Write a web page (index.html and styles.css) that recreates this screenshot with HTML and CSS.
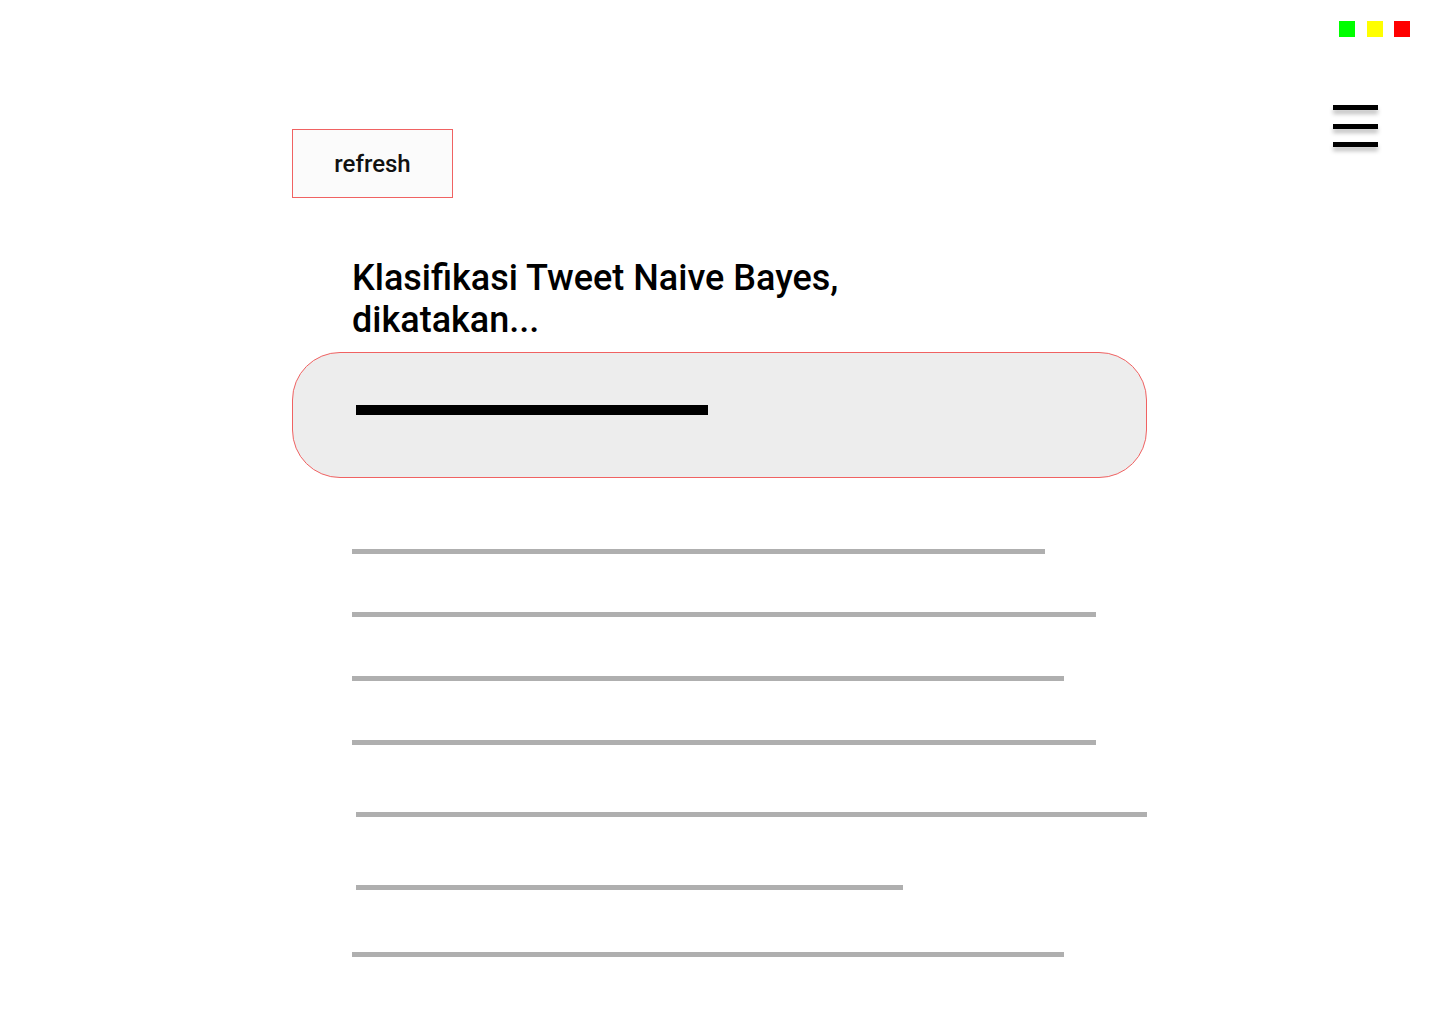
FILE: index.html
```html
<!DOCTYPE html>
<html lang="id">
<head>
<meta charset="utf-8">
<title>Klasifikasi Tweet</title>
<link rel="stylesheet" href="styles.css">
</head>
<body>
  <div class="window-bar">
    <span class="dot dot-green"></span>
    <span class="dot dot-yellow"></span>
    <span class="dot dot-red"></span>
  </div>
  <div class="top-row">
    <button class="refresh-btn" type="button">refresh</button>
    <div class="hamburger" aria-label="menu">
      <span class="bar"></span>
      <span class="bar"></span>
      <span class="bar"></span>
    </div>
  </div>
  <main class="content">
    <h1 class="title">Klasifikasi Tweet Naive Bayes, dikatakan...</h1>
    <div class="search-box">
      <span class="search-text"></span>
    </div>
    <div class="lines">
      <div class="line" style="width:693px"></div>
      <div class="line" style="width:744px"></div>
      <div class="line" style="width:712px"></div>
      <div class="line" style="width:744px"></div>
      <div class="line line-indent" style="width:791px"></div>
      <div class="line line-indent" style="width:547px"></div>
      <div class="line" style="width:712px"></div>
    </div>
  </main>
</body>
</html>
```
FILE: styles.css
```css
* { box-sizing: border-box; }

html, body {
  margin: 0;
  padding: 0;
  background: #ffffff;
  font-family: Roboto, "Liberation Sans", Arial, sans-serif;
  color: #000;
}

.window-bar {
  display: flex;
  justify-content: flex-end;
  gap: 11.5px;
  padding: 21px 30px 0 0;
}

.dot {
  display: block;
  width: 16px;
  height: 16px;
}
.dot-green { background: #00ff00; }
.dot-yellow { background: #ffff00; }
.dot-red { background: #ff0000; }

.top-row {
  display: flex;
  justify-content: space-between;
  align-items: flex-start;
  padding: 0 62px 0 292px;
}

.refresh-btn {
  margin-top: 92px;
  width: 161px;
  height: 69px;
  border: 1px solid #f06262;
  background: #fbfbfb;
  font-family: Roboto, "Liberation Sans", Arial, sans-serif;
  font-size: 24px;
  font-weight: 500;
  color: #111;
  padding: 0;
  cursor: pointer;
}

.hamburger {
  margin-top: 68px;
  display: flex;
  flex-direction: column;
  gap: 13.5px;
  width: 45px;
}

.hamburger .bar {
  display: block;
  height: 5px;
  background: #000;
  box-shadow: 0 4px 4px rgba(0, 0, 0, 0.25);
}

.content {
  padding-left: 292px;
}

.title {
  margin: 59px 0 0 60px;
  max-width: 560px;
  font-size: 36px;
  font-weight: 500;
  line-height: 42px;
}

.search-box {
  margin-top: 11px;
  width: 855px;
  height: 126px;
  border: 1px solid #f06262;
  border-radius: 48px;
  background: #ededed;
  padding: 52px 0 0 63px;
}

.search-text {
  display: block;
  width: 352px;
  height: 10px;
  background: #000;
}

.lines {
  display: flex;
  flex-direction: column;
  padding-left: 60px;
  padding-bottom: 40px;
}

.line {
  height: 5px;
  background: #afafaf;
}
.line:nth-child(1) { margin-top: 71px; }
.line:nth-child(2) { margin-top: 58px; }
.line:nth-child(3) { margin-top: 59px; }
.line:nth-child(4) { margin-top: 59px; }
.line:nth-child(5) { margin-top: 67px; }
.line:nth-child(6) { margin-top: 68px; }
.line:nth-child(7) { margin-top: 62px; }

.line-indent { margin-left: 4px; }
```
